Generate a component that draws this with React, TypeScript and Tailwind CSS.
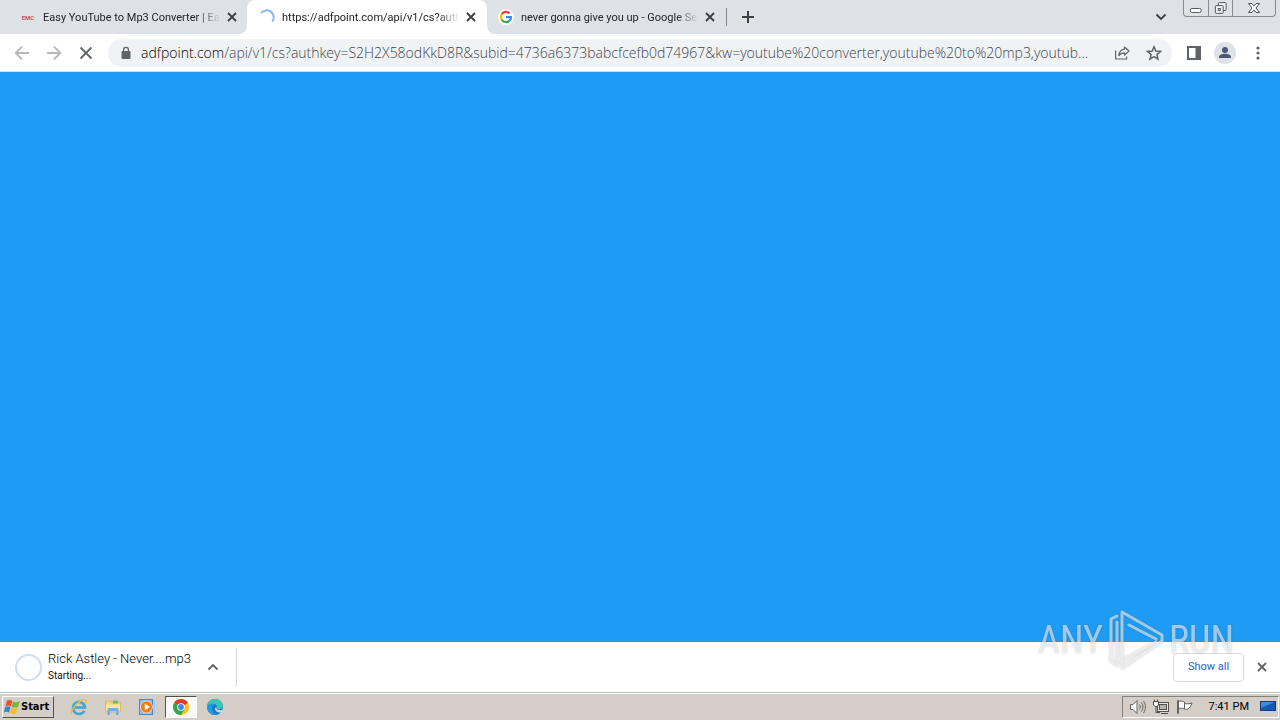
import { ReactNode } from 'react';
import clsx from 'clsx';

interface ITab {
  title: string;
  icon: ReactNode;
  active?: boolean;
}

const CloseIcon = ({ className }: { className?: string }) => (
  <svg
    viewBox="0 0 10 10"
    className={className}
    stroke="currentColor"
    strokeWidth="1.8"
    fill="none"
  >
    <path d="M1 1l8 8M9 1l-8 8" />
  </svg>
);

const GoogleIcon = () => (
  <svg viewBox="0 0 16 16" className="size-4">
    <circle cx="8" cy="8" r="8" fill="#fff" />
    <g fill="none" strokeWidth="2.2">
      <path d="M3.8 5.2A5 5 0 0 1 11.6 4.5" stroke="#ea4335" />
      <path d="M3.8 10.8a5 5 0 0 1 0-5.6" stroke="#fbbc05" />
      <path d="M11.4 11.7a5 5 0 0 1-7.6-.9" stroke="#34a853" />
      <path d="M8 8.2h5a5 5 0 0 1-1.6 3.5" stroke="#4285f4" />
    </g>
  </svg>
);

const SpinnerIcon = () => (
  <svg viewBox="0 0 16 16" className="size-4">
    <path
      d="M2.2 4A7 7 0 1 1 13.2 12.7"
      fill="none"
      stroke="#8ab4ee"
      strokeWidth="2"
    />
  </svg>
);

const tabs: ITab[] = [
  {
    title: 'Easy YouTube to Mp3 Converter | Ea',
    icon: <span className="text-[6px] font-bold text-[#cc5560]">EMC</span>,
  },
  {
    title: 'https://adfpoint.com/api/v1/cs?auth',
    icon: <SpinnerIcon />,
    active: true,
  },
  {
    title: 'never gonna give you up - Google Se',
    icon: <GoogleIcon />,
  },
];

const Tab = ({ title, icon, active }: ITab) => (
  <div
    className={clsx(
      'relative -mr-px flex h-full w-60 items-center rounded-t-lg pl-3',
      active ? 'z-10 bg-white' : 'bg-[#dee1e6]'
    )}
  >
    {active && (
      <>
        <span className="absolute bottom-0 -left-2 size-2 bg-white">
          <span className="block size-2 rounded-br-lg bg-[#dee1e6]" />
        </span>
        <span className="absolute -right-2 bottom-0 size-2 bg-white">
          <span className="block size-2 rounded-bl-lg bg-[#dee1e6]" />
        </span>
      </>
    )}
    <span className="flex size-4 shrink-0 items-center justify-center">
      {icon}
    </span>
    <button
      className="ml-[7px] w-[177px] pt-0.5 text-left text-[11px] whitespace-nowrap text-[#222529] [mask-image:linear-gradient(to_right,black_88%,transparent)]"
      type="button"
    >
      {title}
    </button>
    <button className="ml-[5px] p-0.5" type="button" aria-label="Close tab">
      <CloseIcon className="size-2.5 text-[#3c4043]" />
    </button>
  </div>
);

const WindowControls = () => (
  <div className="flex h-[17px] w-[93px] divide-x divide-[#858b94] self-start rounded-b-[4px] border border-t-0 border-[#858b94] text-[#50555d]">
    <button className="flex-1" type="button" aria-label="Minimize">
      <svg viewBox="0 0 24 16" className="h-4 w-full" fill="#fff" stroke="currentColor">
        <rect x="6.5" y="8.5" width="11" height="4" rx="1.5" />
      </svg>
    </button>
    <button className="flex-1" type="button" aria-label="Restore">
      <svg viewBox="0 0 24 16" className="h-4 w-full" fill="#eef0f3" stroke="currentColor">
        <rect x="9.5" y="2.5" width="8" height="8" rx="1" />
        <rect x="6.5" y="5.5" width="8" height="8" rx="1" />
        <rect x="9.5" y="8.5" width="2" height="2" />
      </svg>
    </button>
    <button className="w-[42px]" type="button" aria-label="Close window">
      <svg viewBox="0 0 42 16" className="h-4 w-full" fill="#fff" stroke="currentColor">
        <path d="M15.5 3.5h3.5l2 2.5 2-2.5h3.5l-3.5 4.5 3.5 4.5H23l-2-2.5-2 2.5h-3.5L19 8z" />
      </svg>
    </button>
  </div>
);

const TabStrip = () => (
  <div className="flex h-[34px] bg-[#dee1e6] pr-1 pl-2">
    {tabs.map((tab) => (
      <Tab key={tab.title} {...tab} />
    ))}
    <span className="ml-px h-[18px] w-px self-center bg-[#80868b]" />
    <button className="ml-[15px] self-center" type="button" aria-label="New tab">
      <svg viewBox="0 0 12 12" className="size-3" stroke="#3c4043" strokeWidth="2">
        <path d="M6 0v12M0 6h12" />
      </svg>
    </button>
    <button className="mr-4 ml-auto" type="button" aria-label="Search tabs">
      <svg viewBox="0 0 12 8" className="h-2 w-3" fill="none" stroke="#3c4043" strokeWidth="1.8">
        <path d="M1.5 1.5L6 6l4.5-4.5" />
      </svg>
    </button>
    <WindowControls />
  </div>
);

const Toolbar = () => (
  <div className="flex h-[38px] items-center border-b border-[#d3dde3] bg-white px-3.5">
    <button type="button" aria-label="Back">
      <svg viewBox="0 0 16 16" className="size-4" fill="none" stroke="#b4b6b9" strokeWidth="1.8">
        <path d="M15 8H2M8 1.7L1.7 8 8 14.3" />
      </svg>
    </button>
    <button className="ml-4" type="button" aria-label="Forward">
      <svg viewBox="0 0 16 16" className="size-4" fill="none" stroke="#b4b6b9" strokeWidth="1.8">
        <path d="M1 8h13M8 1.7L14.3 8 8 14.3" />
      </svg>
    </button>
    <button className="ml-[17px]" type="button" aria-label="Stop loading">
      <svg viewBox="0 0 14 14" className="size-3.5" stroke="#5f6368" strokeWidth="1.8">
        <path d="M1.5 1.5l11 11M12.5 1.5l-11 11" />
      </svg>
    </button>
    <div className="ml-[15px] flex h-7 min-w-0 flex-1 items-center rounded-full bg-[#f0f3f5] pr-2.5 pl-3">
      <svg viewBox="0 0 12 14" className="h-3.5 w-3 shrink-0" fill="#5f6368">
        <rect x="1.5" y="5" width="9" height="8" rx="1" />
        <path d="M3.6 5.5V3.8a2.4 2.4 0 0 1 4.8 0v1.7" fill="none" stroke="#5f6368" strokeWidth="1.3" />
      </svg>
      <p className="ml-[9px] min-w-0 flex-1 overflow-hidden font-['Open_Sans',sans-serif] text-[14px] leading-5 font-light whitespace-nowrap text-[#3f4347]">
        <span className="text-black">adfpoint.com</span>
        /api/v1/cs?authkey=S2H2X58odKkD8R&amp;subid=4736a6373babcfcefb0d74967&amp;kw=youtube%20converter,youtube%20to%20mp3,youtub...
      </p>
      <button className="ml-3" type="button" aria-label="Share">
        <svg viewBox="0 0 16 16" className="size-4" fill="none" stroke="#5f6368" strokeWidth="1.2">
          <path d="M1.6 5.5V14h11v-2.5" />
          <path d="M10.5 2l4.5 4-4.5 4V7.8C8 7.8 6.2 8.6 4.8 10.6 5.2 7 7.2 4.6 10.5 4.2z" strokeLinejoin="round" />
        </svg>
      </button>
      <button className="ml-4" type="button" aria-label="Bookmark">
        <svg viewBox="0 0 16 16" className="size-4" fill="none" stroke="#5f6368" strokeWidth="1.5">
          <path d="M8 1.8l1.8 4.3 4.7.4-3.6 3.1 1.1 4.5L8 11.7l-4 2.4 1.1-4.5L1.5 6.5l4.7-.4z" />
        </svg>
      </button>
    </div>
    <button className="ml-3.5" type="button" aria-label="Side panel">
      <svg viewBox="0 0 16 16" className="size-4" fill="#5f6368">
        <path fillRule="evenodd" d="M1 1h14v14H1zM3 3v10h6.5V3z" />
      </svg>
    </button>
    <button className="ml-3" type="button" aria-label="Profile">
      <svg viewBox="0 0 22 22" className="size-[22px]">
        <circle cx="11" cy="11" r="11" fill="#dde1e8" />
        <g fill="#4c5872">
          <circle cx="11" cy="8" r="3" />
          <path d="M5 16v-1c0-2 3-3.2 6-3.2s6 1.2 6 3.2v1z" />
        </g>
      </svg>
    </button>
    <button className="ml-3.5" type="button" aria-label="Menu">
      <svg viewBox="0 0 16 16" className="size-4" fill="#5f6368">
        <circle cx="8" cy="3" r="1.6" />
        <circle cx="8" cy="8" r="1.6" />
        <circle cx="8" cy="13" r="1.6" />
      </svg>
    </button>
  </div>
);

const DownloadShelf = () => (
  <div className="flex h-[51px] items-center border-b border-[#b8bcc0] bg-white pr-[13px] pl-[15px]">
    <span className="size-[27px] rounded-full border-2 border-[#cfdcf4]" />
    <div className="ml-1.5 w-[153px] whitespace-nowrap">
      <p className="text-[13px] leading-[18px] font-light text-black">
        Rick Astley - Never....mp3
      </p>
      <p className="text-[10px] leading-4 text-[#111]">Starting...</p>
    </div>
    <button className="ml-1.5" type="button" aria-label="Download options">
      <svg viewBox="0 0 12 8" className="h-2 w-3" fill="none" stroke="#5f6368" strokeWidth="1.8">
        <path d="M1.5 6.5L6 2l4.5 4.5" />
      </svg>
    </button>
    <span className="ml-[17px] h-[38px] w-px bg-[#d4d6d9]" />
    <button
      className="mr-[13px] ml-auto h-[29px] w-[71px] rounded-[4px] border border-[#d8dbe0] text-[11px] text-[#1a66cc]"
      type="button"
    >
      Show all
    </button>
    <button type="button" aria-label="Close downloads">
      <CloseIcon className="size-2.5 text-[#5f6368]" />
    </button>
  </div>
);

const WindowsFlag = () => (
  <svg viewBox="0 0 16 16" className="size-4">
    <path d="M3 1.5C5 .5 6.8.8 8.3 2L6.8 7.3C5.2 6.2 3.5 6.2 1.4 7.3z" fill="#e6532b" />
    <path d="M9.1 2.5c2 1.2 4.2 1 6.7-.4L14.2 7.7c-2.5 1.2-4.6 1.2-6.6 0z" fill="#74b843" />
    <path d="M1.2 8.1c2-1.2 3.8-1 5.3 0L5 13.7c-1.6-1.2-3.3-1-5.3 0z" fill="#3b83d6" />
    <path d="M7.4 8.6c2 1.2 4 1.2 6.5 0L12.3 14.3c-2.3 1.2-4.5 1-6.5-.2z" fill="#f5bd2c" />
  </svg>
);

const IeIcon = () => (
  <svg viewBox="0 0 18 18" className="size-[18px]" fill="none">
    <path d="M14.3 12.8A6 6 0 1 1 15 9.5H4.5" stroke="#39a7e0" strokeWidth="2.6" />
    <path d="M2 16.5C-1 14 7 3.5 13.5 1.8c3-.8 3.5 1 2.3 3.5" stroke="#efbe3c" strokeWidth="1.4" />
  </svg>
);

const ExplorerIcon = () => (
  <svg viewBox="0 0 18 18" className="size-[18px]">
    <path d="M1.5 3h5l1 1.5h9V14h-15z" fill="#f0d478" stroke="#cfae55" strokeWidth=".6" />
    <path d="M9 2.5h5v3H9z" fill="#79b86b" />
    <path d="M2 6.5h14V13H2z" fill="#f8e6a0" />
    <path d="M3.5 17v-5.5c0-1 .5-1.5 1.5-1.5h8c1 0 1.5.5 1.5 1.5V17h-2.5v-4H6v4z" fill="#6fb2e0" />
  </svg>
);

const PlayerIcon = () => (
  <svg viewBox="0 0 18 18" className="size-[18px]">
    <rect x="1.5" y="1.5" width="13" height="15" fill="#8fbcec" stroke="#4b86c6" />
    <rect x="15" y="2" width="2" height="14" fill="#a9cbee" />
    <circle cx="8.5" cy="9" r="6" fill="#ed7d17" stroke="#fff" strokeWidth=".6" />
    <path d="M6.8 5.5l5 3.5-5 3.5z" fill="#fff" />
  </svg>
);

const ChromeIcon = () => (
  <svg viewBox="0 0 16 16" className="size-4">
    <circle cx="8" cy="8" r="8" fill="#fbc116" />
    <path d="M8 8L1.1 4A8 8 0 0 1 14.9 4z" fill="#e33b2e" />
    <path d="M8 8L1.1 4A8 8 0 0 0 8 16l3.5-6z" fill="#2da94f" />
    <circle cx="8" cy="8" r="3.8" fill="#fff" />
    <circle cx="8" cy="8" r="2.9" fill="#4285f4" />
  </svg>
);

const EdgeIcon = () => (
  <svg viewBox="0 0 16 16" className="size-4">
    <circle cx="8" cy="8" r="8" fill="#1779c9" />
    <path d="M0 7.5C.5 3 4 0 8 0c5 0 8 3.5 8 6.5 0 2.5-2 3.7-4 3.7-1.5 0-2.5-.6-2.5-1.2 0-.4.5-.6.5-1.5C10 6 8 4.8 5.5 4.8 3 4.8 1 6 0 7.5z" fill="#3ac5b8" />
    <path d="M0 7.5C1 5.8 3 4.8 5.5 4.8c1 0 2 .2 2.7.6C5.5 6 4.7 8 5 10c.3 2.5 2.5 4.8 5.5 5.6A8 8 0 0 1 0 7.5z" fill="#1b9de2" />
    <path d="M9.7 8.5c-.6 1 .3 2.5 3 2.5 1 0 1.8-.2 2.5-.6L16 12.5l-2 1C10.5 14 7.5 11.5 8 9z" fill="#d6d2cb" />
  </svg>
);

const quickLaunch = [
  { name: 'Internet Explorer', icon: <IeIcon /> },
  { name: 'File Explorer', icon: <ExplorerIcon /> },
  { name: 'Media Player', icon: <PlayerIcon /> },
  { name: 'Chrome', icon: <ChromeIcon />, active: true },
  { name: 'Edge', icon: <EdgeIcon /> },
];

const Tray = () => (
  <div className="ml-auto flex h-[22px] items-center border border-t-[#85817b] border-r-white border-b-white border-l-[#85817b] pr-0.5 pl-1.5">
    <svg viewBox="0 0 18 16" className="h-4 w-[18px]" fill="none" stroke="#65625e">
      <path d="M1.5 5.5h2.5l4-4v13l-4-4H1.5z" fill="#fff" />
      <path d="M10.5 5.5c1 1.5 1 3.5 0 5M12.5 3.5c2 2.5 2 6.5 0 9M14.5 2c2.6 3.5 2.6 8.5 0 12" />
    </svg>
    <svg viewBox="0 0 18 16" className="ml-[5px] h-4 w-[18px]" fill="none" stroke="#55524e">
      <rect x="5.5" y="3.5" width="11" height="9" fill="#e8e6e2" />
      <rect x="7.5" y="5.5" width="7" height="5" fill="#b4b1ab" />
      <path d="M9 14.5h7" />
      <path d="M1.5 2.5h5V6L5 7.5H3L1.5 6zM2.5 2.5V.5M5.5 2.5V.5" fill="#fff" />
      <path d="M4 7.5v6h4" />
    </svg>
    <svg viewBox="0 0 18 16" className="ml-1.5 h-4 w-[18px]" fill="#fff" stroke="#65625e">
      <path d="M1.5 1.5h1v13h-1zM2.5 2.5c2-1 4.5-.5 6 .5v7c-1.5-1-4-1-6-.5zM8.5 4.5c2 .5 5 .5 7.5-.5-1 3-2.5 5-4 6-1 .5-2.5.5-3.5 0z" />
    </svg>
    <time className="ml-[15px] pt-px text-[11px] text-black">7:41 PM</time>
    <svg viewBox="0 0 16 14" className="ml-[11px] h-3.5 w-4">
      <rect x=".5" y="1.5" width="15" height="9" fill="#1559b7" stroke="#173d75" />
      <path d="M1 2h14L1 8z" fill="#3e8bdf" />
      <path d="M1 12.5h14" stroke="#c3d2e4" />
    </svg>
  </div>
);

const Taskbar = () => (
  <div className="flex h-[27px] items-center border-t border-white bg-[#d5cec6] pr-px pl-0.5">
    <button
      className="flex h-[22px] w-[52px] items-center gap-px border border-t-white border-r-[#55524e] border-b-[#55524e] border-l-white pl-px font-['DejaVu_Sans_Condensed','DejaVu_Sans',sans-serif] text-[11px] font-bold text-black"
      type="button"
    >
      <WindowsFlag />
      Start
    </button>
    <div className="ml-[9px] flex items-center gap-0.5">
      {quickLaunch.map(({ name, icon, active }) => (
        <button
          key={name}
          type="button"
          aria-label={name}
          className={clsx(
            'flex h-[22px] w-8 items-center justify-center border',
            active
              ? 'border-t-[#55524e] border-r-white border-b-white border-l-[#55524e] bg-[#faf9f8]'
              : 'border-transparent'
          )}
        >
          {icon}
        </button>
      ))}
    </div>
    <Tray />
  </div>
);

const Watermark = () => (
  <div className="pointer-events-none absolute right-[46px] bottom-12 flex items-center gap-1 font-['Roboto_Condensed','Liberation_Sans',sans-serif] text-[38px] leading-10 text-white/55 [filter:drop-shadow(0_0_1px_rgb(90_90_90/0.6))]">
    <span>ANY</span>
    <svg viewBox="0 0 58 64" className="h-16 w-[58px]" fill="none" stroke="currentColor" strokeWidth="3" strokeLinejoin="round" strokeLinecap="round">
      <path d="M10 8L4 11v42l6 4V14" />
      <path d="M22 17l27 14M15 49V4l40 23v6L15 60v-7l34-19" />
    </svg>
    <span>RUN</span>
  </div>
);

export default function App() {
  return (
    <div className="relative flex h-screen flex-col overflow-hidden font-['Roboto',sans-serif]">
      <TabStrip />
      <Toolbar />
      <main className="flex-1 bg-[#1e9bf4]" />
      <DownloadShelf />
      <Taskbar />
      <Watermark />
    </div>
  );
}
